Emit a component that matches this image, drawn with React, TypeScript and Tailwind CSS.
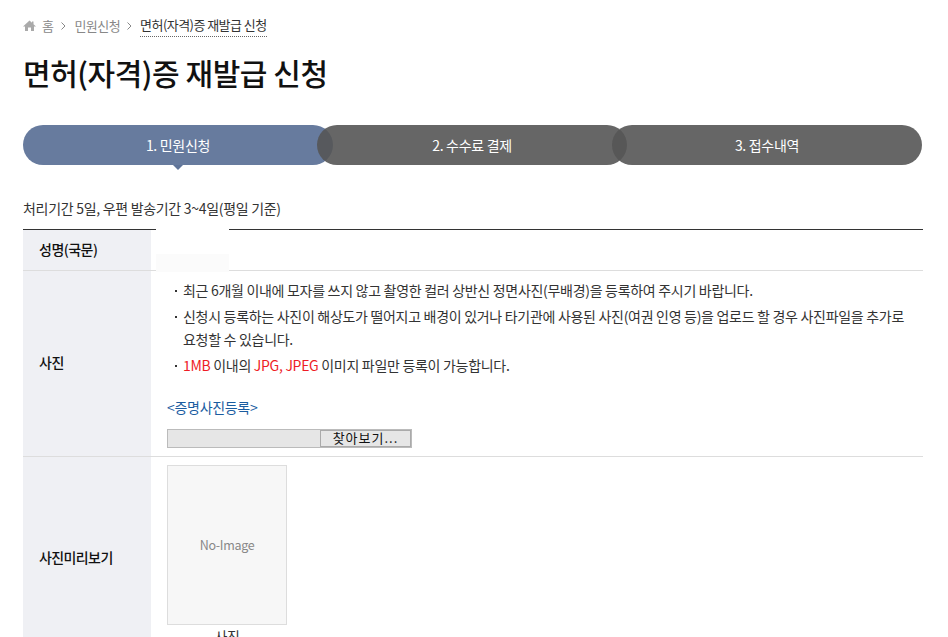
const font = '[font-family:"Noto_Sans_CJK_KR",sans-serif]';

function Step({ label, active, className }: { label: string; active?: boolean; className?: string }) {
  return (
    <div
      className={`relative flex h-10 w-[310px] items-center justify-center rounded-[20px] text-sm tracking-[-0.3px] text-white ${className ?? ''} ${
        active ? 'bg-[#5f7499]/95' : 'bg-[#555555]/90'
      }`}
    >
      {label}
      {active && (
        <span className="absolute top-full left-1/2 -ml-[5px] h-0 w-0 border-x-[5px] border-t-[5px] border-x-transparent border-t-[#5f7499]" />
      )}
    </div>
  );
}

function Bullet({ children }: { children: React.ReactNode }) {
  return (
    <li className="relative pl-4 leading-[23px] before:absolute before:left-[8px] before:top-[11px] before:h-[2px] before:w-[2px] before:bg-[#333333]">
      {children}
    </li>
  );
}

export default function App() {
  return (
    <div className={`relative h-[637px] w-[948px] overflow-hidden bg-white text-[#333333] ${font}`}>
      <div className="px-[23px] pt-[14px]">
        {/* Breadcrumb */}
        <div className="flex h-6 items-center text-[13px] tracking-[-0.55px] text-[#888888]">
          <svg width="13" height="12" viewBox="0 0 13 12" className="mr-[6px]" fill="#aaaaaa">
            <path d="M6.5.5 0 6.5h2V11h3V7.5h3V11h3V6.5h2L10.500 4.200V1.500H9v1.300z" />
          </svg>
          <span>홈</span>
          <svg width="5" height="8" viewBox="0 0 5 8" className="mr-[8px] ml-[8px]" fill="none" stroke="#888888">
            <path d="m.5.5 3.500 3.500-3.500 3.500" />
          </svg>
          <span>민원신청</span>
          <svg width="5" height="8" viewBox="0 0 5 8" className="mr-[8px] ml-[7px]" fill="none" stroke="#888888">
            <path d="m.5.5 3.500 3.500-3.500 3.500" />
          </svg>
          <span className="border-b border-dotted border-[#666666] pb-[2px] text-[#333333]">면허(자격)증 재발급 신청</span>
        </div>

        <h1 className="mt-[10px] text-[30px] leading-[48px] font-medium tracking-[-0.45px] text-[#111111]">
          면허(자격)증 재발급 신청
        </h1>

        {/* Steps */}
        <div className="mt-[29px] flex">
          <Step label="1. 민원신청" active />
          <Step label="2. 수수료 결제" className="-ml-[16px]" />
          <Step label="3. 접수내역" className="-ml-[15px]" />
        </div>

        <p className="mt-[31px] text-sm leading-[24px] tracking-[-0.3px]">처리기간 5일, 우편 발송기간 3~4일(평일 기준)</p>

        {/* Form table */}
        <div className="relative mt-[9px] w-[900px] border-t border-[#333333] text-sm tracking-[-0.3px]">
          <div className="flex h-[41px] border-b border-[#dddddd]">
            <div className="flex w-[128px] items-center bg-[#eff0f4] pb-[3px] pl-4 font-medium tracking-[-0.5px] text-[#111111]">성명(국문)</div>
            <div className="flex-1" />
          </div>
          <div className="flex h-[186px] border-b border-[#dddddd]">
            <div className="flex w-[128px] items-center bg-[#eff0f4] pb-[3px] pl-4 font-medium tracking-[-0.5px] text-[#111111]">사진</div>
            <div className="flex-1 pt-2 pl-4">
              <ul className="flex w-[745px] flex-col gap-[3px]">
                <Bullet>최근 6개월 이내에 모자를 쓰지 않고 촬영한 컬러 상반신 정면사진(무배경)을 등록하여 주시기 바랍니다.</Bullet>
                <Bullet>
                  신청시 등록하는 사진이 해상도가 떨어지고 배경이 있거나 타기관에 사용된 사진(여권 인영 등)을 업로드 할 경우 사진파일을 추가로 요청할 수 있습니다.
                </Bullet>
                <Bullet>
                  <span className="text-[#ee1c25]">1MB</span> 이내의 <span className="text-[#ee1c25]">JPG, JPEG</span> 이미지 파일만 등록이 가능합니다.
                </Bullet>
              </ul>
              <p className="mt-[18px] leading-[24px] text-[#1a5c9f]">&lt;증명사진등록&gt;</p>
              <div className="mt-[10px] flex h-[19px] w-[245px] border border-[#bbbbbb] bg-[#e6e6e6]">
                <div className="w-[152px]" />
                <div className="flex flex-1 items-center justify-center border border-[#aaaaaa] text-[13px] tracking-[1px] text-[#111111]">
                  찾아보기...
                </div>
              </div>
            </div>
          </div>
          <div className="flex h-[200px]">
            <div className="flex w-[128px] items-center bg-[#eff0f4] pl-4 font-medium tracking-[-0.6px] text-[#111111]">사진미리보기</div>
            <div className="flex-1 pt-2 pl-4">
              <div className="flex h-[160px] w-[120px] items-center justify-center border border-[#dddddd] bg-[#f7f7f7] text-[12.5px] text-[#888888]">
                No-Image
              </div>
              <p className="w-[120px] pt-[1px] text-center">사진</p>
            </div>
          </div>
          {/* hidden input fading over the table */}
          <div className="absolute top-[-5px] left-[133px] h-[47px] w-[73px] bg-white">
            <div className="mt-[29px] h-[18px] bg-[#fbfbfb]" />
          </div>
        </div>
      </div>
    </div>
  );
}
